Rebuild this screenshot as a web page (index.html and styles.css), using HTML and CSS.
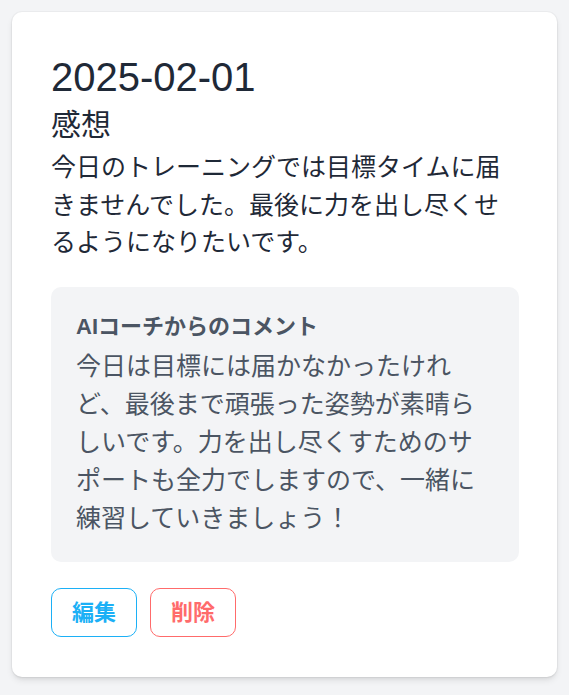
FILE: index.html
```html
<!DOCTYPE html>
<html lang="ja">
<head>
<meta charset="utf-8">
<title>日記</title>
<link rel="stylesheet" href="styles.css">
</head>
<body>
<div class="page">
  <article class="card">
    <h2 class="date">2025-02-01</h2>
    <h3 class="label">感想</h3>
    <p class="body">今日のトレーニングでは目標タイムに届きませんでした。最後に力を出し尽くせるようになりたいです。</p>
    <section class="comment">
      <h4 class="comment-title">AIコーチからのコメント</h4>
      <p class="comment-text">今日は目標には届かなかったけれど、最後まで頑張った姿勢が素晴らしいです。力を出し尽くすためのサポートも全力でしますので、一緒に練習していきましょう！</p>
    </section>
    <div class="actions">
      <button class="btn btn-edit">編集</button>
      <button class="btn btn-delete">削除</button>
    </div>
  </article>
</div>
</body>
</html>
```

FILE: styles.css
```css
html, body {
  margin: 0;
  padding: 0;
  background: #f3f4f6;
}
body {
  font-family: "Liberation Sans", "Noto Sans CJK JP", sans-serif;
  color: #1f2937;
}
.page {
  padding: 12px;
}
.card {
  background: #ffffff;
  border-radius: 10px;
  padding: 40px 38px 40px 39px;
  box-shadow: 0 0 0 1px rgba(0,0,0,0.03), 0 4px 7px -1px rgba(0,0,0,0.1), 0 2px 4px -2px rgba(0,0,0,0.1);
}
.date {
  margin: 0;
  font-size: 40px;
  line-height: 51px;
  font-weight: 400;
  color: #1f2937;
}
.label {
  margin: 0 0 2px;
  font-size: 30px;
  line-height: 44px;
  font-weight: 400;
  color: #1f2937;
}
.body {
  margin: 0;
  font-size: 25px;
  line-height: 37.5px;
  color: #1f2937;
}
.comment {
  margin-top: 25px;
  background: #f3f4f6;
  border-radius: 10px;
  padding: 25px;
}
.comment-title {
  margin: 0 0 5px;
  font-size: 22px;
  line-height: 30px;
  font-weight: 700;
  color: #4b5563;
}
.comment-text {
  margin: 0;
  font-size: 25px;
  line-height: 38px;
  color: #4b5563;
}
.actions {
  display: flex;
  gap: 13px;
  margin-top: 26px;
}
.btn {
  font-family: "Liberation Sans", "Noto Sans CJK JP", sans-serif;
  font-size: 22px;
  font-weight: 700;
  line-height: 29px;
  padding: 9px 20px;
  background: #ffffff;
  border-radius: 10px;
  border: 1.5px solid;
  cursor: pointer;
}
.btn-edit {
  color: #1cb0f6;
  border-color: #1cb0f6;
}
.btn-delete {
  color: #ff6b6b;
  border-color: #ff6b6b;
}
```
